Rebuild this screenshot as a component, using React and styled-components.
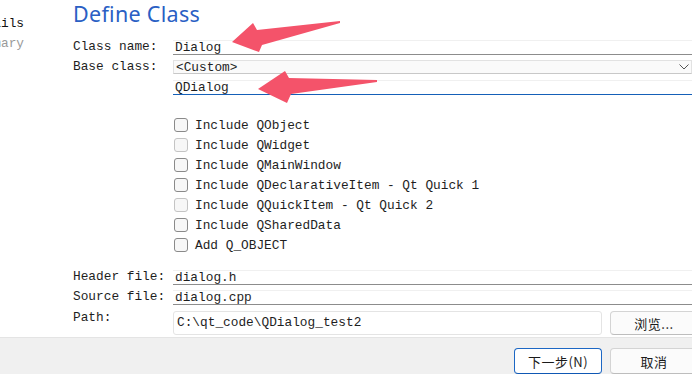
import React from "react";
import styled, { createGlobalStyle } from "styled-components";

const GlobalStyle = createGlobalStyle`
  html, body {
    margin: 0;
    padding: 0;
    background: #fff;
    overflow: hidden;
  }
  * {
    box-sizing: border-box;
  }
`;

const Window = styled.div`
  position: relative;
  width: 692px;
  height: 374px;
  display: flex;
  flex-direction: column;
  overflow: hidden;
  background: #fff;
  font-family: "Liberation Mono", "Noto Sans CJK SC", monospace;
  font-size: 12.8px;
  color: #1e1e1e;
`;

const Body = styled.div`
  flex: 1;
  display: flex;
  min-height: 0;
`;

const Sidebar = styled.div`
  width: 24px;
  overflow: hidden;
  padding-top: 14px;
  display: flex;
  flex-direction: column;
  align-items: flex-end;
`;

const SideItem = styled.div`
  line-height: 20px;
  white-space: nowrap;
  color: ${(p) => (p.$muted ? "#9a9a9a" : "#111")};
`;

const Content = styled.div`
  flex: 1;
  min-width: 0;
  padding-left: 49px;
  display: flex;
  flex-direction: column;
`;

const Title = styled.h1`
  margin: 1px 0 11px;
  font-family: "Noto Sans", "Open Sans", sans-serif;
  font-weight: 400;
  font-size: 21.5px;
  line-height: 25px;
  letter-spacing: 0.3px;
  color: #2a5fc4;
`;

const Form = styled.div`
  display: grid;
  grid-template-columns: 100px 1fr;
  grid-auto-rows: 20px;
  align-items: center;
`;

const Label = styled.div`
  line-height: 20px;
  white-space: nowrap;
`;

const LineEdit = styled.div`
  height: 15px;
  line-height: 14px;
  padding-left: 2px;
  background: #fff;
  border-top: 1px solid #f0f0f0;
  border-bottom: 1px solid ${(p) => (p.$focused ? "#1560b8" : "#8c8c8c")};
  overflow: hidden;
  white-space: nowrap;
`;

const Combo = styled.div`
  height: 14px;
  line-height: 13px;
  padding: 0 0 0 2px;
  background: #fafafa;
  border: 1px solid #e2e2e2;
  border-bottom-color: #c8c8c8;
  display: flex;
  align-items: center;
  justify-content: space-between;
  white-space: nowrap;
`;

const Chevron = styled.svg`
  width: 10px;
  height: 6px;
  margin-right: 2px;
`;

const Checks = styled.div`
  margin: 18px 0 12px 100px;
  display: flex;
  flex-direction: column;
`;

const CheckRow = styled.div`
  height: 20px;
  display: flex;
  align-items: center;
  gap: 7px;
`;

const Box = styled.span`
  width: 14px;
  height: 14px;
  margin-left: 1px;
  border: 1px solid ${(p) => (p.$faint ? "#c4c4c4" : "#8a8a8a")};
  border-radius: 3px;
  background: #f7f7f7;
`;

const PathRow = styled.div`
  display: grid;
  grid-template-columns: 100px 429px 96px;
  height: 30px;
  align-items: start;
`;

const PathLabel = styled(Label)`
  margin-top: 1px;
`;

const PathEdit = styled.div`
  margin-top: 4px;
  height: 24px;
  line-height: 22px;
  padding-left: 3px;
  background: #fff;
  border: 1px solid #e4e4e4;
  border-radius: 3px;
  white-space: nowrap;
`;

const Button = styled.button`
  height: ${(p) => (p.$tall ? "26px" : "24px")};
  width: 88px;
  flex-shrink: 0;
  margin: ${(p) => (p.$tall ? "0" : "4px 0 0 8px")};
  border: 1px solid ${(p) => (p.$primary ? "#1c67c4" : "#d4d4d4")};
  border-bottom-color: ${(p) => (p.$primary ? "#0f58b4" : "#bdbdbd")};
  border-radius: 4px;
  background: ${(p) => (p.$primary ? "#fff" : "#fbfbfb")};
  font-family: "Noto Sans CJK SC", "Liberation Sans", sans-serif;
  font-size: 13px;
  line-height: 1;
  color: #1a1a1a;
  padding: 0;
  letter-spacing: 0.5px;
`;

const Footer = styled.div`
  height: 37px;
  flex-shrink: 0;
  background: #f0f0f0;
  border-top: 1px solid #e4e4e4;
  display: flex;
  gap: 8px;
  padding: 10px 0 0 514px;
`;

const Overlay = styled.svg`
  position: absolute;
  left: 0;
  top: 0;
  width: 692px;
  height: 374px;
  pointer-events: none;
`;

const checks = [
  { text: "Include QObject" },
  { text: "Include QWidget", faint: true },
  { text: "Include QMainWindow" },
  { text: "Include QDeclarativeItem - Qt Quick 1" },
  { text: "Include QQuickItem - Qt Quick 2", faint: true },
  { text: "Include QSharedData" },
  { text: "Add Q_OBJECT" },
];

export default function App() {
  return (
    <Window>
      <GlobalStyle />
      <Body>
        <Sidebar>
          <SideItem>Details</SideItem>
          <SideItem $muted>Summary</SideItem>
        </Sidebar>
        <Content>
          <Title>Define Class</Title>
          <Form>
            <Label>Class name:</Label>
            <LineEdit>Dialog</LineEdit>
            <Label>Base class:</Label>
            <Combo>
              &lt;Custom&gt;
              <Chevron viewBox="0 0 10 6">
                <path d="M0.5 0.5 L5 5 L9.5 0.5" fill="none" stroke="#555" strokeWidth="1" />
              </Chevron>
            </Combo>
            <span />
            <LineEdit $focused>QDialog</LineEdit>
          </Form>
          <Checks>
            {checks.map((c) => (
              <CheckRow key={c.text}>
                <Box $faint={c.faint} />
                {c.text}
              </CheckRow>
            ))}
          </Checks>
          <Form>
            <Label>Header file:</Label>
            <LineEdit>dialog.h</LineEdit>
            <Label>Source file:</Label>
            <LineEdit>dialog.cpp</LineEdit>
          </Form>
          <PathRow>
            <PathLabel>Path:</PathLabel>
            <PathEdit>C:\qt_code\QDialog_test2</PathEdit>
            <Button>浏览...</Button>
          </PathRow>
        </Content>
      </Body>
      <Footer>
        <Button $primary $tall>下一步(N)</Button>
        <Button $tall>取消</Button>
      </Footer>
      <Overlay viewBox="0 0 692 374">
        <polygon points="232,42 253,23 257,30 340,21 340,23 262,45 259,52" fill="#f4536a" />
        <polygon points="258,89 285,71 289,78 377,80 377,82 291,94 287,103" fill="#f4536a" />
      </Overlay>
    </Window>
  );
}
